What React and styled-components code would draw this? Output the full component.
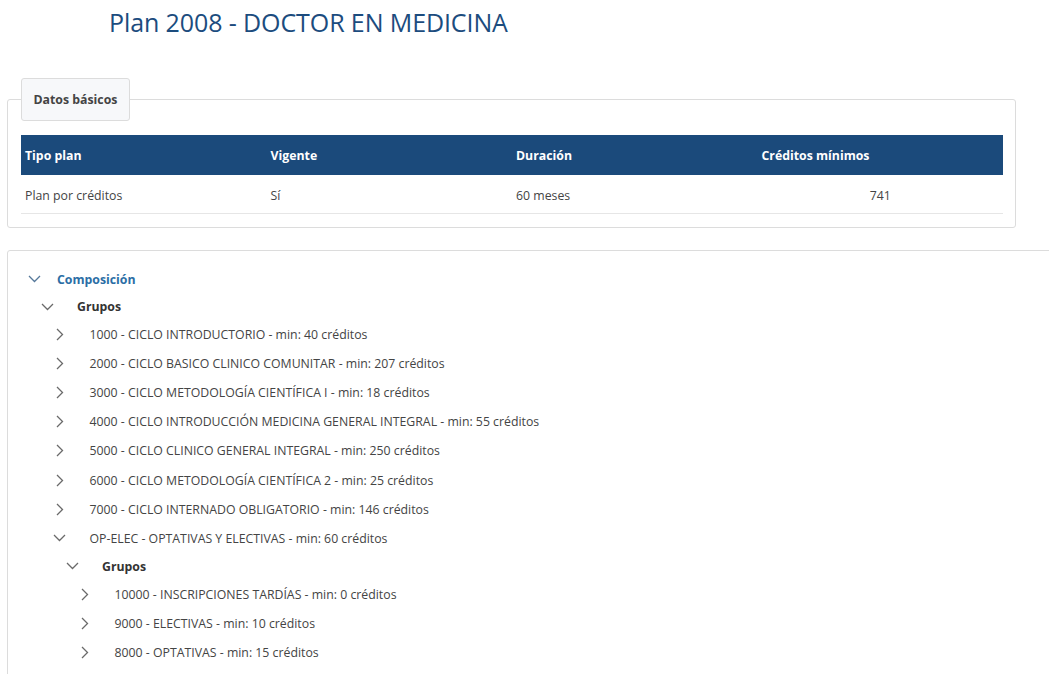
import React from 'react'
import styled, { createGlobalStyle } from 'styled-components'

const GlobalStyle = createGlobalStyle`
  html, body {
    margin: 0;
    padding: 0;
    background: #fff;
    overflow: hidden;
  }
  body {
    font-family: 'Open Sans', 'Noto Sans', sans-serif;
    color: #444;
  }
`

const Page = styled.div`
  padding: 0 0 0 7px;
  width: 1049px;
  box-sizing: border-box;
`

const Title = styled.h1`
  margin: 0;
  padding: 5px 0 0 102px;
  height: 47px;
  font-size: 25px;
  font-weight: 400;
  color: #1c4c7e;
  letter-spacing: -0.1px;
`

const Fieldset = styled.fieldset`
  margin: 26px 0 0 0;
  width: 1009px;
  box-sizing: border-box;
  padding: 14px 12px 13px 13px;
  border: 1px solid #dcdcdc;
  border-radius: 3px;
`

const Legend = styled.legend`
  box-sizing: border-box;
  height: 43px;
  line-height: 41px;
  padding: 0 11.5px;
  background: #f7f8fa;
  border: 1px solid #dcdcdc;
  border-radius: 3px;
  font-size: 12.3px;
  font-weight: 700;
  color: #444;
`

const Table = styled.table`
  width: 100%;
  border-collapse: collapse;
  table-layout: fixed;
  font-size: 12.3px;
`

const HeadCell = styled.th`
  height: 40px;
  padding: 0 4px;
  background: #1b4a7b;
  color: #fff;
  text-align: left;
  font-weight: 700;
`

const Cell = styled.td`
  height: 36px;
  padding: 2px 4px 0;
  border-bottom: 1px solid #e6e6e6;
  color: #444;
  text-align: ${({ $center }) => ($center ? 'center' : 'left')};
`

const TreePanel = styled.div`
  margin-top: 22px;
  width: 1060px;
  height: 430px;
  border: 1px solid #dcdcdc;
  border-radius: 3px;
  padding: 14px 0 0 0;
  box-sizing: border-box;
`

const Row = styled.div`
  display: flex;
  align-items: center;
  height: ${({ $h }) => $h}px;
  padding-left: ${({ $depth }) => 18.5 + $depth * 12.5}px;
  font-size: 12.3px;
`

const Toggle = styled.span`
  display: inline-flex;
  align-items: center;
  justify-content: center;
  width: 16px;
  height: 16px;
  flex: none;
  color: ${({ $accent }) => ($accent ? '#55789a' : '#6a6a6a')};
`

const Label = styled.span`
  margin-left: ${({ $gap }) => $gap}px;
  white-space: nowrap;
  font-weight: ${({ $kind }) => ($kind === 'item' ? 400 : 700)};
  color: ${({ $kind }) =>
    $kind === 'root' ? '#2b6ea5' : $kind === 'group' ? '#333' : '#444'};
`

const ChevronDown = () => (
  <svg width="13" height="8" viewBox="0 0 13 8" fill="none">
    <polyline points="1,1 6.5,6.5 12,1" stroke="currentColor" strokeWidth="1.3" />
  </svg>
)

const ChevronRight = () => (
  <svg width="8" height="13" viewBox="0 0 8 13" fill="none">
    <polyline points="1,1 6.5,6.5 1,12" stroke="currentColor" strokeWidth="1.3" />
  </svg>
)

const tree = [
  { depth: 0, kind: 'root', open: true, h: 28, label: 'Composición' },
  { depth: 1, kind: 'group', open: true, h: 27, label: 'Grupos' },
  { depth: 2, kind: 'item', label: '1000 - CICLO INTRODUCTORIO - min: 40 créditos' },
  { depth: 2, kind: 'item', label: '2000 - CICLO BASICO CLINICO COMUNITAR - min: 207 créditos' },
  { depth: 2, kind: 'item', label: '3000 - CICLO METODOLOGÍA CIENTÍFICA I - min: 18 créditos' },
  { depth: 2, kind: 'item', label: '4000 - CICLO INTRODUCCIÓN MEDICINA GENERAL INTEGRAL - min: 55 créditos' },
  { depth: 2, kind: 'item', label: '5000 - CICLO CLINICO GENERAL INTEGRAL - min: 250 créditos' },
  { depth: 2, kind: 'item', label: '6000 - CICLO METODOLOGÍA CIENTÍFICA 2 - min: 25 créditos' },
  { depth: 2, kind: 'item', label: '7000 - CICLO INTERNADO OBLIGATORIO - min: 146 créditos' },
  { depth: 2, kind: 'item', open: true, label: 'OP-ELEC - OPTATIVAS Y ELECTIVAS - min: 60 créditos' },
  { depth: 3, kind: 'group', open: true, h: 27, label: 'Grupos' },
  { depth: 4, kind: 'item', label: '10000 - INSCRIPCIONES TARDÍAS - min: 0 créditos' },
  { depth: 4, kind: 'item', label: '9000 - ELECTIVAS - min: 10 créditos' },
  { depth: 4, kind: 'item', label: '8000 - OPTATIVAS - min: 15 créditos' },
]

const App = () => (
  <Page>
    <GlobalStyle />
    <Title>Plan 2008 - DOCTOR EN MEDICINA</Title>

    <Fieldset>
      <Legend>Datos básicos</Legend>
      <Table>
        <thead>
          <tr>
            <HeadCell>Tipo plan</HeadCell>
            <HeadCell>Vigente</HeadCell>
            <HeadCell>Duración</HeadCell>
            <HeadCell>Créditos mínimos</HeadCell>
          </tr>
        </thead>
        <tbody>
          <tr>
            <Cell>Plan por créditos</Cell>
            <Cell>Sí</Cell>
            <Cell>60 meses</Cell>
            <Cell $center>741</Cell>
          </tr>
        </tbody>
      </Table>
    </Fieldset>

    <TreePanel>
      {tree.map((node, i) => (
        <Row key={i} $depth={node.depth} $h={node.h || 29.1}>
          <Toggle $accent={node.depth === 0}>
            {node.open ? <ChevronDown /> : <ChevronRight />}
          </Toggle>
          <Label $kind={node.kind} $gap={node.depth === 0 ? 14.5 : 22}>
            {node.label}
          </Label>
        </Row>
      ))}
    </TreePanel>
  </Page>
)

export default App
